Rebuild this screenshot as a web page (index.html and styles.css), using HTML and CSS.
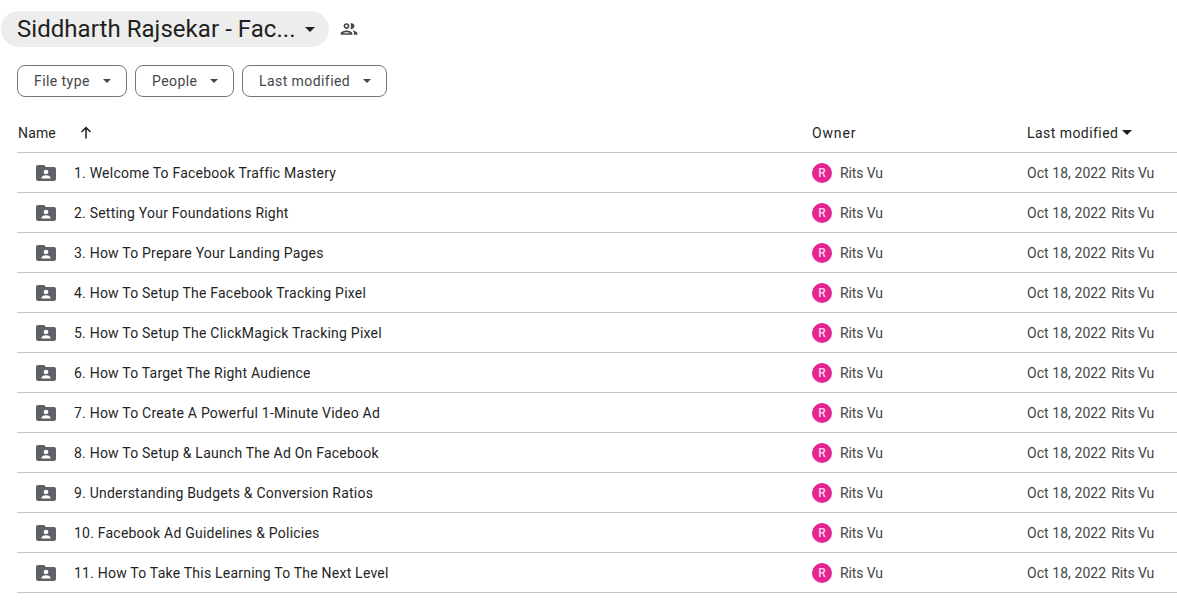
FILE: index.html
```html
<!DOCTYPE html>
<html lang="en">
<head>
<meta charset="utf-8">
<title>Siddharth Rajsekar - Facebook Traffic Mastery</title>
<link rel="stylesheet" href="styles.css">
</head>
<body>
<svg class="defs" width="0" height="0" aria-hidden="true">
  <symbol id="shared" viewBox="0 0 24 24">
    <path d="M10 4H4c-1.1 0-2 .9-2 2v12c0 1.1.9 2 2 2h16c1.1 0 2-.9 2-2V8c0-1.100-.9-2-2-2h-8l-2-2z" fill="currentColor"/>
    <circle cx="12" cy="11" r="2.300" fill="#fff"/>
    <path d="M7.500 17.500v-.8c0-1.700 3-2.500 4.500-2.500s4.500.8 4.500 2.500v.8z" fill="#fff"/>
  </symbol>
</svg>
<header class="title-row">
  <div class="title-pill">
    <span class="title-text">Siddharth Rajsekar - Fac...</span>
    <span class="caret caret-title"></span>
  </div>
  <svg class="people-icon" viewBox="0 0 24 24" aria-hidden="true">
    <path d="M9 13.750c-2.340 0-7 1.170-7 3.500V19h14v-1.750c0-2.330-4.660-3.500-7-3.500zM4.340 17c.84-.58 2.870-1.250 4.660-1.250s3.820.67 4.660 1.250H4.340zM9 12c1.930 0 3.500-1.570 3.500-3.500S10.930 5 9 5 5.500 6.570 5.500 8.500 7.070 12 9 12zm0-5c.83 0 1.500.67 1.500 1.500S9.830 10 9 10s-1.500-.67-1.500-1.500S8.170 7 9 7zm7.040 6.810c1.160.84 1.960 1.960 1.960 3.440V19h4v-1.750c0-2.020-3.500-3.170-5.960-3.440zM15 12c1.930 0 3.500-1.570 3.500-3.500S16.930 5 15 5c-.54 0-1.040.13-1.500.35.630.89 1 1.980 1 3.150s-.37 2.260-1 3.150c.46.220.96.350 1.500.350z" fill="currentColor"/>
  </svg>
</header>
<div class="filters">
  <button class="chip chip-type">File type<span class="caret"></span></button>
  <button class="chip chip-people">People<span class="caret"></span></button>
  <button class="chip chip-modified">Last modified<span class="caret"></span></button>
</div>
<main class="table">
  <div class="row head">
    <div class="col-name">
      <span class="name-label">Name</span>
      <svg class="arrow" viewBox="0 0 16 16" aria-hidden="true"><path d="M8 2.500v11M3.500 7 8 2.500 12.500 7" fill="none" stroke="currentColor" stroke-width="1.500"/></svg>
    </div>
    <div class="col-owner owner-head">Owner</div>
    <div class="col-mod">Last modified<span class="caret caret-sort"></span></div>
  </div>
  <div class="row"><div class="col-name"><svg class="folder"><use href="#shared"/></svg><span class="fname">1. Welcome To Facebook Traffic Mastery</span></div><div class="col-owner"><span class="avatar">R</span><span class="muted">Rits Vu</span></div><div class="col-mod"><span class="date">Oct 18, 2022</span><span class="muted">Rits Vu</span></div></div>
  <div class="row"><div class="col-name"><svg class="folder"><use href="#shared"/></svg><span class="fname">2. Setting Your Foundations Right</span></div><div class="col-owner"><span class="avatar">R</span><span class="muted">Rits Vu</span></div><div class="col-mod"><span class="date">Oct 18, 2022</span><span class="muted">Rits Vu</span></div></div>
  <div class="row"><div class="col-name"><svg class="folder"><use href="#shared"/></svg><span class="fname">3. How To Prepare Your Landing Pages</span></div><div class="col-owner"><span class="avatar">R</span><span class="muted">Rits Vu</span></div><div class="col-mod"><span class="date">Oct 18, 2022</span><span class="muted">Rits Vu</span></div></div>
  <div class="row"><div class="col-name"><svg class="folder"><use href="#shared"/></svg><span class="fname">4. How To Setup The Facebook Tracking Pixel</span></div><div class="col-owner"><span class="avatar">R</span><span class="muted">Rits Vu</span></div><div class="col-mod"><span class="date">Oct 18, 2022</span><span class="muted">Rits Vu</span></div></div>
  <div class="row"><div class="col-name"><svg class="folder"><use href="#shared"/></svg><span class="fname">5. How To Setup The ClickMagick Tracking Pixel</span></div><div class="col-owner"><span class="avatar">R</span><span class="muted">Rits Vu</span></div><div class="col-mod"><span class="date">Oct 18, 2022</span><span class="muted">Rits Vu</span></div></div>
  <div class="row"><div class="col-name"><svg class="folder"><use href="#shared"/></svg><span class="fname">6. How To Target The Right Audience</span></div><div class="col-owner"><span class="avatar">R</span><span class="muted">Rits Vu</span></div><div class="col-mod"><span class="date">Oct 18, 2022</span><span class="muted">Rits Vu</span></div></div>
  <div class="row"><div class="col-name"><svg class="folder"><use href="#shared"/></svg><span class="fname">7. How To Create A Powerful 1-Minute Video Ad</span></div><div class="col-owner"><span class="avatar">R</span><span class="muted">Rits Vu</span></div><div class="col-mod"><span class="date">Oct 18, 2022</span><span class="muted">Rits Vu</span></div></div>
  <div class="row"><div class="col-name"><svg class="folder"><use href="#shared"/></svg><span class="fname">8. How To Setup &amp; Launch The Ad On Facebook</span></div><div class="col-owner"><span class="avatar">R</span><span class="muted">Rits Vu</span></div><div class="col-mod"><span class="date">Oct 18, 2022</span><span class="muted">Rits Vu</span></div></div>
  <div class="row"><div class="col-name"><svg class="folder"><use href="#shared"/></svg><span class="fname">9. Understanding Budgets &amp; Conversion Ratios</span></div><div class="col-owner"><span class="avatar">R</span><span class="muted">Rits Vu</span></div><div class="col-mod"><span class="date">Oct 18, 2022</span><span class="muted">Rits Vu</span></div></div>
  <div class="row"><div class="col-name"><svg class="folder"><use href="#shared"/></svg><span class="fname">10. Facebook Ad Guidelines &amp; Policies</span></div><div class="col-owner"><span class="avatar">R</span><span class="muted">Rits Vu</span></div><div class="col-mod"><span class="date">Oct 18, 2022</span><span class="muted">Rits Vu</span></div></div>
  <div class="row"><div class="col-name"><svg class="folder"><use href="#shared"/></svg><span class="fname">11. How To Take This Learning To The Next Level</span></div><div class="col-owner"><span class="avatar">R</span><span class="muted">Rits Vu</span></div><div class="col-mod"><span class="date">Oct 18, 2022</span><span class="muted">Rits Vu</span></div></div>
</main>
</body>
</html>
```
FILE: styles.css
```css
* { box-sizing: border-box; }
html, body { margin: 0; height: 100%; overflow: hidden; }
body {
  background: #fff;
  color: #1f1f1f;
  font-family: Roboto, "Liberation Sans", sans-serif;
  font-size: 14px;
  padding-top: 11px;
}
.defs { display: block; height: 0; }
.title-row { display: flex; align-items: center; padding-left: 1px; height: 36px; }
.title-pill {
  width: 328px;
  height: 36px;
  border-radius: 18px;
  background: #ededed;
  display: flex;
  align-items: center;
  padding-left: 16px;
}
.title-text { font-size: 24px; letter-spacing: 0.05px; line-height: 36px; white-space: nowrap; color: #1f1f1f; width: 288px; flex: none; }
.caret {
  display: inline-block;
  width: 0; height: 0;
  border-left: 5px solid transparent;
  border-right: 5px solid transparent;
  border-top: 5px solid #444746;
}
.caret-title { border-top-color: #1f1f1f; }
.people-icon { width: 20px; height: 20px; margin-left: 10px; color: #444746; }
.filters { display: flex; gap: 8px; padding-left: 17px; margin-top: 18px; }
.chip {
  height: 32px;
  border: 1px solid #747775;
  border-radius: 8px;
  background: #fff;
  color: #444746;
  font: 14px/30px Roboto, "Liberation Sans", sans-serif;
  letter-spacing: 0.43px;
  padding: 0 0 0 16px;
  display: flex;
  align-items: center;
  justify-content: space-between;
}
.chip .caret { border-left-width: 4px; border-right-width: 4px; border-top-width: 4px; margin-right: 15px; }
.chip-type { width: 110px; }
.chip-people { width: 99px; }
.chip-modified { width: 145px; }
.table { margin: 16px 0 0 17px; }
.row { display: flex; align-items: center; height: 40px; border-bottom: 1px solid #c7c7c7; }
.head { letter-spacing: 0.45px; }
.col-name { width: 795px; flex: none; display: flex; align-items: center; }
.col-owner { width: 215px; flex: none; display: flex; align-items: center; color: #1f1f1f; }
.owner-head { letter-spacing: 0.85px; }
.col-mod { flex: 1; display: flex; align-items: center; }
.name-label { margin-left: 1px; letter-spacing: 0.14px; }
.arrow { width: 16px; height: 16px; margin-left: 22px; color: #1f1f1f; }
.caret-sort { margin-left: 4px; border-top-color: #1f1f1f; }
.folder { width: 24px; height: 24px; margin-left: 17px; margin-right: 16px; color: #5f6368; flex: none; }
.fname { white-space: nowrap; letter-spacing: 0.22px; }
.avatar {
  width: 20px; height: 20px;
  border-radius: 50%;
  background: #e52592;
  color: #fbd4ea;
  font-size: 12px;
  font-weight: 500;
  line-height: 20px;
  text-align: center;
  margin-right: 8px;
  flex: none;
}
.muted { color: #444746; letter-spacing: -0.12px; }
.date { color: #444746; letter-spacing: 0.06px; margin-right: 5px; }
```
